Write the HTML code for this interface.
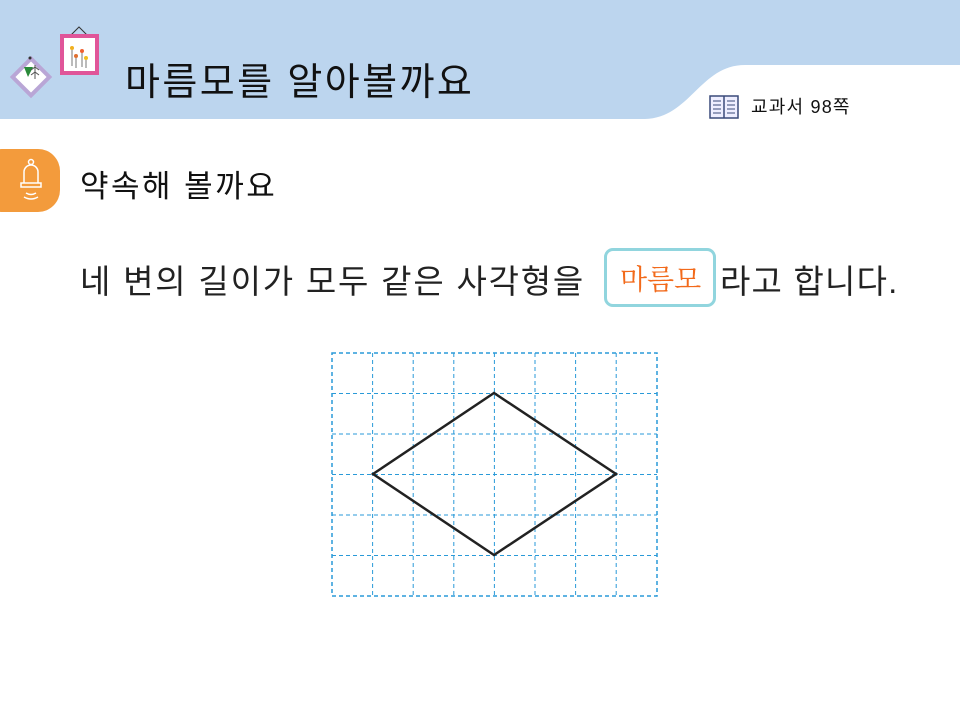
<!DOCTYPE html>
<html><head><meta charset="utf-8"><style>
body{margin:0;width:960px;height:720px;position:relative;background:#fff;overflow:hidden;font-family:"Liberation Sans","Noto Sans CJK KR",sans-serif;color:#222}
.t{position:absolute;white-space:nowrap}
</style></head><body>
<svg style="position:absolute;left:0;top:0" width="960" height="130">
<path d="M0 0H960V65H745C700 65 690 118 645 119H0Z" fill="#bcd5ee"/>
<g transform="translate(31,77) rotate(45)"><rect x="-13" y="-13" width="26" height="26" fill="#fff" stroke="#b9a6d6" stroke-width="4"/></g>
<path d="M24 67l4 10l5-10" fill="#2a8a3a"/>
<path d="M35 65v14M31 70l4-3l4 3M31 75l4-3l4 3" stroke="#555" stroke-width="1" fill="none"/>
<circle cx="30" cy="58" r="1.5" fill="#333"/>
<path d="M70 36l9-9l9 9" stroke="#333" fill="none"/>
<rect x="62" y="36" width="35" height="37" fill="#fff" stroke="#e05599" stroke-width="4"/>
<circle cx="72" cy="48" r="2" fill="#f0b020"/><circle cx="82" cy="51" r="2" fill="#f06030"/><circle cx="86" cy="58" r="2" fill="#f0c020"/><circle cx="76" cy="56" r="2" fill="#e07030"/>
<path d="M72 50v16M82 53v14M86 60v8M76 58v10" stroke="#777"/>
<g transform="translate(709,94)" stroke="#3a4a7a" fill="#fff" stroke-width="1.5"><path d="M1 2h14v22H1zM15 2h14v22H15z" fill="#eef"/><path d="M4 7h8M4 11h8M4 15h8M4 19h8M18 7h8M18 11h8M18 15h8M18 19h8" stroke-width="1"/></g>
</svg>
<div class="t" style="left:125px;top:51px;font-size:38px;letter-spacing:2.4px;color:#111">마름모를 알아볼까요</div>
<div class="t" style="left:751px;top:93px;font-size:18px;letter-spacing:1.2px;color:#111">교과서 98쪽</div>
<div style="position:absolute;left:-20px;top:149px;width:80px;height:63px;background:#f39b3c;border-radius:22px"></div>
<svg style="position:absolute;left:18px;top:158px" width="26" height="44" stroke="#fff" fill="none" stroke-width="1.5"><circle cx="13" cy="4" r="2.5"/><path d="M6 25V14a7 7 0 0 1 14 0V25M3 25h20v4H3zM8 35q5 3 10 0M6 39q7 4 14 0"/></svg>
<div class="t" style="left:80px;top:161px;font-size:31px;letter-spacing:2.5px;color:#111">약속해 볼까요</div>
<div class="t" style="left:80px;top:255px;font-size:33px;letter-spacing:1.8px;color:#222">네 변의 길이가 모두 같은 사각형을</div>
<div style="position:absolute;left:604px;top:248px;width:106px;height:53px;border:3px solid #91d5de;border-radius:9px"></div>
<div class="t" style="left:620px;top:258px;font-size:28px;color:#f26a1b;font-family:'Noto Serif CJK SC',serif">마름모</div>
<div class="t" style="left:720px;top:255px;font-size:33px;letter-spacing:1.2px;color:#222">라고 합니다.</div>
<svg style="position:absolute;left:0;top:0" width="960" height="720">
<g stroke="#2a9ad8" stroke-width="1" stroke-dasharray="4,3">
<path d="M372.6 353V596M413.2 353V596M453.8 353V596M494.4 353V596M535 353V596M575.6 353V596M616.2 353V596M332 393.5H657M332 434H657M332 474.5H657M332 515H657M332 555.5H657"/>
<rect x="332" y="353" width="325" height="243" fill="none" stroke-width="1.5"/>
</g>
<path d="M373 474L494 393L616 474L494 555Z" fill="none" stroke="#222" stroke-width="2.5"/>
</svg>
</body></html>
